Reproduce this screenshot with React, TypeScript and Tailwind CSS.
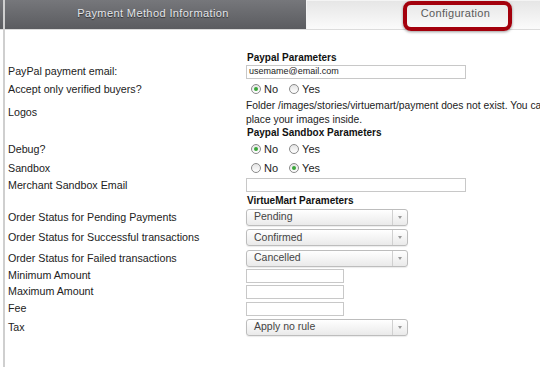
import React from "react";

const font = { fontFamily: '"Liberation Sans", Arial, sans-serif' };

function Radio({ checked }: { checked?: boolean }) {
  return (
    <span className="inline-flex h-[10px] w-[10px] items-center justify-center rounded-full border border-[#8a8a8a] bg-gradient-to-b from-[#e4e4e4] to-white">
      {checked && <span className="h-[4px] w-[4px] rounded-full bg-[#3aa63a]" />}
    </span>
  );
}

function RadioPair({ yes }: { yes?: boolean }) {
  return (
    <div className="flex items-center pl-[5px] text-[11px] text-[#222]">
      <Radio checked={!yes} />
      <span className="ml-[3px] mr-[11px]">No</span>
      <Radio checked={yes} />
      <span className="ml-[3px]">Yes</span>
    </div>
  );
}

function TextInput({ w, value }: { w: string; value?: string }) {
  return (
    <div className={`${w} flex h-[14px] items-center border border-[#c8c8c8] bg-white px-[2px] text-[9px] text-[#222]`}>
      {value}
    </div>
  );
}

function Select({ value }: { value: string }) {
  return (
    <div className="flex h-[17px] w-[162px] items-stretch rounded-[3px] border border-[#bdbdbd] bg-gradient-to-b from-white to-[#eaeaea] shadow-[0_1px_1px_rgba(0,0,0,0.08)]">
      <div className="flex flex-1 items-center pl-[7px] text-[10.5px] text-[#444]">{value}</div>
      <div className="flex w-[15px] items-center justify-center border-l border-[#d0d0d0]">
        <span className="h-0 w-0 border-x-[2.5px] border-t-[3px] border-x-transparent border-t-[#999]" />
      </div>
    </div>
  );
}

function Row({ label, h, children }: { label?: string; h: string; children?: React.ReactNode }) {
  return (
    <div className={`flex ${h} items-center`}>
      <div className="w-[238px] shrink-0 text-[10.7px] text-[#222]">{label}</div>
      <div className="flex-1">{children}</div>
    </div>
  );
}

function Heading({ text, h }: { text: string; h: string }) {
  return (
    <div className={`flex ${h} items-center`}>
      <div className="w-[239px] shrink-0" />
      <div className="text-[10px] font-bold text-[#111]">{text}</div>
    </div>
  );
}

export default function App() {
  return (
    <div className="relative h-[367px] w-[540px] overflow-hidden bg-white" style={font}>
      <div className="absolute left-[3px] top-0 h-full w-[2px] bg-[#cfcfcf]" />
      {/* Tabs */}
      <div className="flex h-[30px] w-[620px] border-b border-[#dcdcdc]">
        <div className="flex w-[306px] justify-center bg-gradient-to-b from-[#76777b] to-[#5b5c60] pt-[5px] text-[11px] tracking-[0.4px] text-[#e4e6ea] [text-shadow:0_1px_1px_rgba(0,0,0,0.6)]">
          Payment Method Information
        </div>
        <div className="flex w-[298px] justify-center border-l border-t border-[#f4f4f4] bg-gradient-to-b from-[#e6e6e6] to-[#fbfbfb] pt-[4px] text-[11px] tracking-[0.3px] text-[#5a5a5a]">
          Configuration
        </div>
      </div>
      {/* annotation box */}
      <div className="absolute left-[403px] top-[1px] h-[30px] w-[109px] rounded-[8px] border-[4px] border-[#a3000c] shadow-[0_1px_3px_rgba(0,0,0,0.4)]" />

      <div className="pl-[8px] pt-[20px]">
        <Heading text="Paypal Parameters" h="h-[14px]" />
        <Row label="PayPal payment email:" h="h-[15px]">
          <TextInput w="w-[220px]" value="usemame@email.com" />
        </Row>
        <Row label="Accept only verified buyers?" h="h-[20px]">
          <RadioPair />
        </Row>
        <div className="flex h-[27px] items-center">
          <div className="w-[238px] shrink-0 text-[10.7px] text-[#222]">Logos</div>
          <div className="whitespace-nowrap text-[10.3px] leading-[14px] text-[#222]">
            <div>Folder /images/stories/virtuemart/payment does not exist. You can create it and</div>
            <div>place your images inside.</div>
          </div>
        </div>
        <Heading text="Paypal Sandbox Parameters" h="h-[13px]" />
        <Row label="Debug?" h="h-[20px]">
          <RadioPair />
        </Row>
        <Row label="Sandbox" h="h-[18px]">
          <RadioPair yes />
        </Row>
        <Row label="Merchant Sandbox Email" h="h-[16px]">
          <TextInput w="w-[220px]" />
        </Row>
        <Heading text="VirtueMart Parameters" h="h-[14px]" />
        <Row label="Order Status for Pending Payments" h="h-[20px]">
          <Select value="Pending" />
        </Row>
        <Row label="Order Status for Successful transactions" h="h-[21px]">
          <Select value="Confirmed" />
        </Row>
        <Row label="Order Status for Failed transactions" h="h-[20px]">
          <Select value="Cancelled" />
        </Row>
        <Row label="Minimum Amount" h="h-[15px]">
          <TextInput w="w-[98px]" />
        </Row>
        <Row label="Maximum Amount" h="h-[17px]">
          <TextInput w="w-[98px]" />
        </Row>
        <Row label="Fee" h="h-[17px]">
          <TextInput w="w-[98px]" />
        </Row>
        <Row label="Tax" h="h-[20px]">
          <Select value="Apply no rule" />
        </Row>
      </div>
    </div>
  );
}
